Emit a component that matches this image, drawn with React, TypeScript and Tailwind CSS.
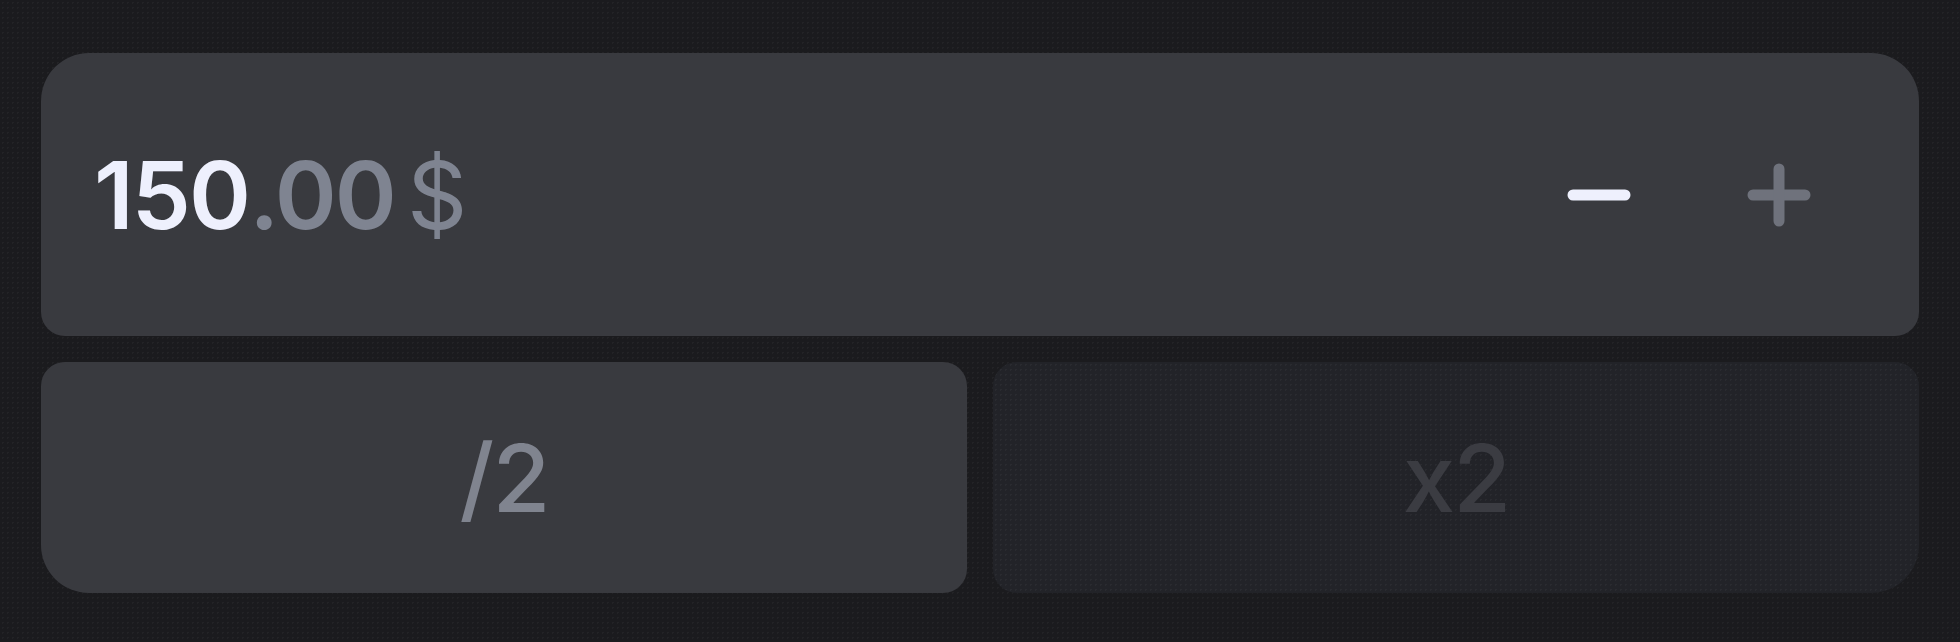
const NOISE =
  'bg-[radial-gradient(rgba(255,255,255,0.035)_1px,transparent_1px)] bg-[length:5px_5px]'

function StepIcon({ kind, className }: { kind: 'minus' | 'plus'; className: string }) {
  return (
    <svg width="64" height="64" viewBox="0 0 64 64" className={className} fill="none">
      <line x1="6" y1="32" x2="58" y2="32" stroke="currentColor" strokeWidth="11" strokeLinecap="round" />
      {kind === 'plus' && (
        <line x1="32" y1="6" x2="32" y2="58" stroke="currentColor" strokeWidth="11" strokeLinecap="round" />
      )}
    </svg>
  )
}

export default function App() {
  return (
    <div
      className={`flex h-[642px] w-[1960px] flex-col gap-[26px] bg-[#1b1b1e] px-[41px] pt-[53px] ${NOISE}`}
      style={{ fontFamily: 'Inter, "Noto Sans", sans-serif' }}
    >
      <div className="flex h-[283px] items-center rounded-t-[48px] rounded-b-[24px] bg-[#393a3f] pl-[53px] pr-[108px]">
        <div className="flex items-baseline text-[94px] leading-none tracking-[-0.02em]">
          <span className="font-semibold text-[#eef0fd]">150</span>
          <span className="font-semibold text-[#7f8491]">.00</span>
          <span className="ml-[12px] font-normal text-[#7f8491]">$</span>
        </div>
        <div className="ml-auto flex items-center gap-[116px]">
          <button className="flex items-center justify-center">
            <StepIcon kind="minus" className="text-[#eef0fd]" />
          </button>
          <button className="flex items-center justify-center">
            <StepIcon kind="plus" className="text-[#6f727c]" />
          </button>
        </div>
      </div>

      <div className="flex h-[231px] gap-[26px]">
        <button className="flex flex-1 items-center justify-center rounded-[24px] rounded-bl-[48px] bg-[#393a3f] text-[94px] font-medium leading-none tracking-[-0.02em] text-[#80848f]">
          /2
        </button>
        <button
          className={`flex flex-1 items-center justify-center rounded-[24px] rounded-br-[48px] bg-[#222328] text-[94px] font-medium leading-none tracking-[-0.02em] text-[#3b3c42] ${NOISE}`}
        >
          x2
        </button>
      </div>
    </div>
  )
}
